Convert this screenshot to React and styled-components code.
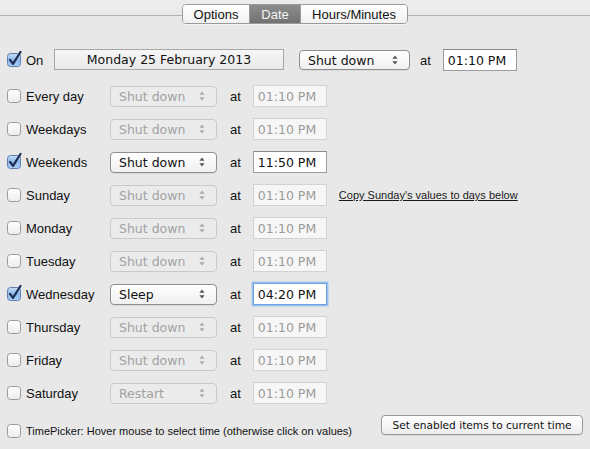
import React from "react";
import styled, { createGlobalStyle, css } from "styled-components";

const Global = createGlobalStyle`
  html, body { margin: 0; padding: 0; }
  body {
    background: #e8e8e8;
    width: 590px;
    height: 449px;
    overflow: hidden;
    font-family: "Liberation Sans", Arial, sans-serif;
  }
`;

const Window = styled.div`
  width: 590px;
  height: 449px;
  display: flex;
  flex-direction: column;
`;

const TabBar = styled.div`
  display: flex;
  align-items: center;
  height: 20px;
  padding-top: 4px;
  background: linear-gradient(#ececec 0, #ececec 11px, #e8e8e8 11px);
`;

const TabLine = styled.div`
  flex: 1;
  height: 1px;
  background: #b3b3b3;
  margin-top: 2px;
`;

const Segmented = styled.div`
  display: flex;
  height: 20px;
  box-sizing: border-box;
  border: 1px solid #9a9a9a;
  border-radius: 4px;
  overflow: hidden;
  box-shadow: 0 1px 0 rgba(255,255,255,0.6);
  margin-left: 0;
`;

const Tab = styled.div`
  width: ${(p) => p.$w}px;
  box-sizing: border-box;
  display: flex;
  align-items: center;
  justify-content: center;
  font-size: 13px;
  color: #111;
  background: linear-gradient(#ffffff, #f1f1f1);
  border-left: ${(p) => (p.$first ? "none" : "1px solid #9a9a9a")};
  ${(p) =>
    p.$active &&
    css`
      background: linear-gradient(#8c8c8c, #727272);
      color: #f4f4f4;
    `}
`;

const Content = styled.div`
  display: flex;
  flex-direction: column;
  padding: 25px 0 0 7px;
  gap: 11px;
`;

const Row = styled.div`
  display: flex;
  align-items: center;
  height: 22px;
  margin-bottom: ${(p) => p.$extra || 0}px;
`;

const CheckGroup = styled.label`
  display: flex;
  align-items: center;
  gap: 5px;
  width: ${(p) => p.$w}px;
  flex-shrink: 0;
  font-size: ${(p) => p.$fs || 13}px;
  color: #111;
  white-space: nowrap;
`;

const BoxSvg = styled.svg`
  width: 14px;
  height: 14px;
  overflow: visible;
  flex-shrink: 0;
`;

const Checkbox = ({ checked }) => (
  <BoxSvg viewBox="0 0 14 14">
    <defs>
      <linearGradient id="cbOn" x1="0" y1="0" x2="0" y2="1">
        <stop offset="0" stopColor="#c9def7" />
        <stop offset="0.5" stopColor="#8db8ec" />
        <stop offset="1" stopColor="#a9cdf5" />
      </linearGradient>
      <linearGradient id="cbOff" x1="0" y1="0" x2="0" y2="1">
        <stop offset="0" stopColor="#ffffff" />
        <stop offset="1" stopColor="#ececec" />
      </linearGradient>
    </defs>
    <rect
      x="0.5"
      y="0.5"
      width="13"
      height="13"
      rx="3"
      fill={checked ? "url(#cbOn)" : "url(#cbOff)"}
      stroke={checked ? "#5c7fae" : "#9a9a9a"}
    />
    {checked && (
      <path
        d="M3 6.8 L6 10.8 L13.5 -1"
        fill="none"
        stroke="#1d2d4f"
        strokeWidth="2.2"
        strokeLinecap="round"
        strokeLinejoin="round"
      />
    )}
  </BoxSvg>
);

const DateField = styled.div`
  width: 230px;
  height: 21px;
  box-sizing: border-box;
  border: 1px solid #a6a6a6;
  background: linear-gradient(#f6f6f6, #e9e9e9);
  display: flex;
  align-items: center;
  justify-content: center;
  font-family: "DejaVu Sans", sans-serif;
  font-size: 12.5px;
  color: #111;
  margin-right: 15px;
  align-self: flex-start;
`;

const Select = styled.div`
  width: ${(p) => p.$w}px;
  height: ${(p) => p.$h}px;
  box-sizing: border-box;
  border-radius: 4px;
  display: flex;
  align-items: center;
  justify-content: space-between;
  padding: 0 11px 0 8px;
  font-family: "DejaVu Sans", sans-serif;
  font-size: 12.5px;
  flex-shrink: 0;
  ${(p) =>
    p.$disabled
      ? css`
          border: 1px solid #c9c9c9;
          background: #ebebeb;
          color: #a2a2a2;
        `
      : css`
          border: 1px solid #8f8f8f;
          background: linear-gradient(#ffffff, #f0f0f0);
          color: #111;
          box-shadow: 0 1px 0 rgba(0, 0, 0, 0.06);
        `}
`;

const Arrows = ({ color }) => (
  <svg width="6" height="10" viewBox="0 0 6 10">
    <path d="M3 0.5 L5.6 3.8 L0.4 3.8 Z" fill={color} />
    <path d="M3 9.5 L5.6 6.2 L0.4 6.2 Z" fill={color} />
  </svg>
);

const At = styled.span`
  font-size: 13px;
  color: #111;
  margin: 0 12px 0 ${(p) => p.$ml}px;
`;

const TimeField = styled.div`
  width: 74px;
  height: 22px;
  box-sizing: border-box;
  display: flex;
  align-items: center;
  padding-left: 4px;
  font-family: "DejaVu Sans", sans-serif;
  font-size: 12.5px;
  flex-shrink: 0;
  ${(p) =>
    p.$disabled
      ? css`
          border: 1px solid #d2d2d2;
          background: #f6f6f6;
          color: #9b9b9b;
        `
      : p.$focused
      ? css`
          border: 1px solid #6b9ee0;
          box-shadow: 0 0 0 1.5px #9fc3f0;
          background: #fff;
          color: #111;
        `
      : css`
          border: 1px solid #9c9c9c;
          border-top-color: #8a8a8a;
          background: #fff;
          color: #111;
        `}
`;

const CopyLink = styled.a`
  font-size: 11px;
  color: #1a1a1a;
  text-decoration: underline;
  margin-left: 12px;
  cursor: pointer;
`;

const Bottom = styled.div`
  display: flex;
  align-items: flex-start;
  justify-content: space-between;
  padding-right: 7px;
  margin-top: 0;
`;

const BottomCheck = styled(CheckGroup)`
  padding-top: 9px;
`;

const Button = styled.div`
  width: 202px;
  height: 20px;
  box-sizing: border-box;
  border: 1px solid #9a9a9a;
  border-radius: 4px;
  background: linear-gradient(#ffffff, #ededed);
  box-shadow: 0 1px 0 rgba(0, 0, 0, 0.06);
  display: flex;
  align-items: center;
  justify-content: center;
  font-family: "DejaVu Sans", sans-serif;
  font-size: 10.6px;
  color: #111;
`;

const days = [
  { name: "Every day", checked: false, action: "Shut down", time: "01:10 PM" },
  { name: "Weekdays", checked: false, action: "Shut down", time: "01:10 PM" },
  { name: "Weekends", checked: true, action: "Shut down", time: "11:50 PM" },
  { name: "Sunday", checked: false, action: "Shut down", time: "01:10 PM", copy: true },
  { name: "Monday", checked: false, action: "Shut down", time: "01:10 PM" },
  { name: "Tuesday", checked: false, action: "Shut down", time: "01:10 PM" },
  { name: "Wednesday", checked: true, action: "Sleep", time: "04:20 PM", focused: true },
  { name: "Thursday", checked: false, action: "Shut down", time: "01:10 PM" },
  { name: "Friday", checked: false, action: "Shut down", time: "01:10 PM" },
  { name: "Saturday", checked: false, action: "Restart", time: "01:10 PM" },
];

export default function App() {
  return (
    <Window>
      <Global />
      <TabBar>
        <TabLine />
        <Segmented>
          <Tab $w={66} $first>Options</Tab>
          <Tab $w={51} $active>Date</Tab>
          <Tab $w={107}>Hours/Minutes</Tab>
        </Segmented>
        <TabLine />
      </TabBar>
      <Content>
        <Row $extra={3}>
          <CheckGroup $w={47}>
            <Checkbox checked />
            On
          </CheckGroup>
          <DateField>Monday 25 February 2013</DateField>
          <Select $w={111} $h={20}>
            Shut down
            <Arrows color="#555" />
          </Select>
          <At $ml={10}>at</At>
          <TimeField>01:10 PM</TimeField>
        </Row>
        {days.map((d) => (
          <Row key={d.name}>
            <CheckGroup $w={103}>
              <Checkbox checked={d.checked} />
              {d.name}
            </CheckGroup>
            <Select $w={107} $h={21} $disabled={!d.checked}>
              {d.action}
              <Arrows color={d.checked ? "#555" : "#aaa"} />
            </Select>
            <At $ml={13}>at</At>
            <TimeField $disabled={!d.checked} $focused={d.focused}>
              {d.time}
            </TimeField>
            {d.copy && <CopyLink>Copy Sunday's values to days below</CopyLink>}
          </Row>
        ))}
        <Bottom>
          <BottomCheck $fs={11}>
            <Checkbox checked={false} />
            TimePicker: Hover mouse to select time (otherwise click on values)
          </BottomCheck>
          <Button>Set enabled items to current time</Button>
        </Bottom>
      </Content>
    </Window>
  );
}
